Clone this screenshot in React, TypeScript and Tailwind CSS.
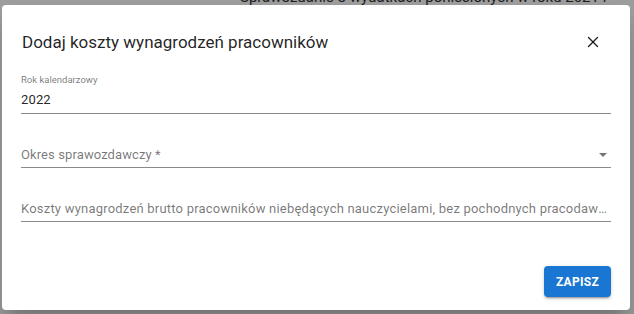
import { X } from "lucide-react";

const font = "font-['Roboto','Liberation_Sans',sans-serif]";

export default function App() {
  return (
    <div className={`relative h-[314px] w-[634px] overflow-hidden bg-white ${font}`}>
      {/* page behind */}
      <div className="-mt-[12px] pl-[240px] text-[15px] leading-[18px] text-[#333]">
        Sprawozdanie o wydatkach poniesionych w roku 2021 i
      </div>
      <div className="absolute inset-0 bg-black/[0.38]" />

      {/* dialog */}
      <div className="absolute left-[2px] top-[5px] flex h-[305px] w-[628px] flex-col rounded-[4px] bg-white shadow-[0_11px_15px_-7px_rgba(0,0,0,0.2),0_24px_38px_3px_rgba(0,0,0,0.14)]">
        <div className="flex items-center justify-between pl-[20px] pr-[28px] pt-[26px]">
          <h2 className="text-[17px] leading-[22px] text-black/[0.87]">
            Dodaj koszty wynagrodzeń pracowników
          </h2>
          <X className="h-[18px] w-[18px] text-black/[0.87]" strokeWidth={1.8} />
        </div>

        <div className="flex flex-col pl-[19px] pr-[19px]">
          <div className="mt-[21px] border-b border-[#8a8a8a] pb-[3px]">
            <div className="text-[9.5px] leading-[12px] text-black/[0.54]">Rok kalendarzowy</div>
            <div className="mt-[4px] text-[13px] leading-[20px] tracking-[0.15px] text-black/[0.87]">2022</div>
          </div>

          <div className="mt-[31px] flex items-center justify-between border-b border-[#8a8a8a] pb-[2px]">
            <div className="text-[13px] leading-[20px] tracking-[0.1px] text-black/[0.54]">Okres sprawozdawczy *</div>
            <svg width="8" height="4" viewBox="0 0 8 4" className="mr-[4px]">
              <path d="M0 0 L4 4 L8 0 Z" fill="rgba(0,0,0,0.54)" />
            </svg>
          </div>

          <div className="mt-[31px] border-b border-[#8a8a8a] pb-[2px]">
            <div className="truncate text-[13px] leading-[20px] tracking-[0.21px] text-black/[0.54]">
              Koszty wynagrodzeń brutto pracowników niebędących nauczycielami, bez pochodnych pracodawcy
            </div>
          </div>
        </div>

        <div className="mt-auto flex justify-end pb-[13px] pr-[19px]">
          <button className="h-[31px] w-[67px] rounded-[4px] bg-[#1976d2] text-[12px] font-bold tracking-[0.3px] text-white shadow-[0_3px_1px_-2px_rgba(0,0,0,0.2),0_2px_2px_0_rgba(0,0,0,0.14),0_1px_5px_0_rgba(0,0,0,0.12)]">
            ZAPISZ
          </button>
        </div>
      </div>
    </div>
  );
}
